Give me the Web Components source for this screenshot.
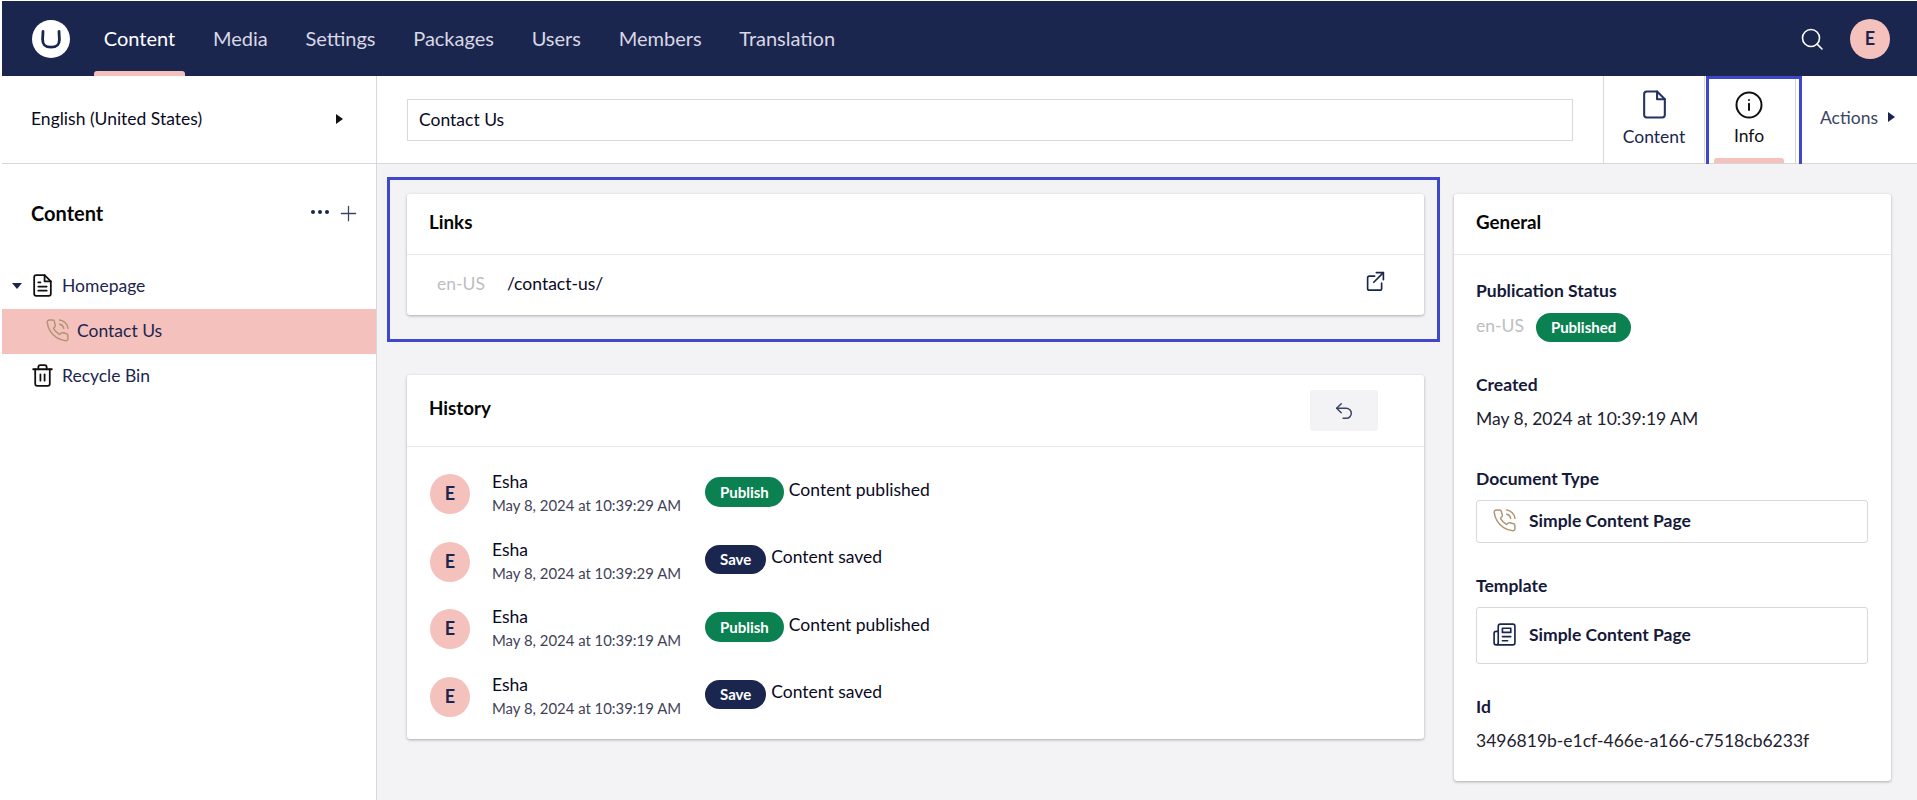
<!DOCTYPE html>
<html lang="en">
<head>
<meta charset="utf-8">
<title>Content</title>
<style>
  html, body { margin: 0; height: 100%; background: #fff; overflow: hidden; }
  body { font-family: Lato, "Noto Sans", sans-serif; font-size: 17.5px; color: #1b264f; }
</style>
</head>
<body>
<app-shell>
  <top-bar slot="top"></top-bar>
  <side-panel slot="side"></side-panel>
  <editor-bar slot="bar"></editor-bar>
  <info-view slot="main"></info-view>
</app-shell>

<script>
// icon paths, lucide style, all on a 24 box
const ICONS = {
  file: '<path d="M14 2H6a2 2 0 0 0-2 2v16a2 2 0 0 0 2 2h12a2 2 0 0 0 2-2V8z"/><path d="M14 2v6h6"/>',
  fileText: '<path d="M14 2H6a2 2 0 0 0-2 2v16a2 2 0 0 0 2 2h12a2 2 0 0 0 2-2V8z"/><path d="M14 2v6h6"/><path d="M16 13H8"/><path d="M16 17H8"/><path d="M10 9H8"/>',
  info: '<circle cx="12" cy="12" r="10"/><path d="M12 16v-5"/><path d="M12 8h.01"/>',
  search: '<circle cx="11" cy="11" r="8.5"/><path d="m22 22-4.9-4.9"/>',
  phone: '<path d="M22 16.92v3a2 2 0 0 1-2.18 2 19.79 19.79 0 0 1-8.63-3.07 19.5 19.5 0 0 1-6-6 19.79 19.79 0 0 1-3.07-8.67A2 2 0 0 1 4.11 2h3a2 2 0 0 1 2 1.72 12.84 12.84 0 0 0 .7 2.81 2 2 0 0 1-.45 2.11L8.09 9.91a16 16 0 0 0 6 6l1.27-1.27a2 2 0 0 1 2.11-.45 12.84 12.84 0 0 0 2.81.7A2 2 0 0 1 22 16.92z"/><path d="M14.05 2a9 9 0 0 1 8 7.94"/><path d="M14.05 6A5 5 0 0 1 18 10"/>',
  trash: '<path d="M3 6h18"/><path d="M19 6v14a2 2 0 0 1-2 2H7a2 2 0 0 1-2-2V6"/><path d="M8 6V4a2 2 0 0 1 2-2h4a2 2 0 0 1 2 2v2"/><path d="M10 11v6"/><path d="M14 11v6"/>',
  news: '<path d="M4 22h16a2 2 0 0 0 2-2V4a2 2 0 0 0-2-2H8a2 2 0 0 0-2 2v16a2 2 0 0 1-2 2Zm0 0a2 2 0 0 1-2-2v-9c0-1.1.9-2 2-2h2"/><path d="M18 14h-8"/><path d="M15 18h-5"/><path d="M10 6h8v4h-8V6Z"/>',
  open: '<path d="M11 7H5a2 2 0 0 0-2 2v12a2 2 0 0 0 2 2h12a2 2 0 0 0 2-2v-6"/><path d="M13 3h8v8"/><path d="M10 14 21 3"/>',
  undo: '<path d="M9 14 4 9l5-5"/><path d="M4 9h10.5a5.5 5.5 0 0 1 0 11H11"/>',
  plus: '<path d="M12 3v18"/><path d="M3 12h18"/>',
};

function icon(name, size, color, weight = 2) {
  return `<svg width="${size}" height="${size}" viewBox="0 0 24 24" fill="none" stroke="${color}"
    stroke-width="${weight}" stroke-linecap="round" stroke-linejoin="round" style="display:block;flex:none">${ICONS[name]}</svg>`;
}

// small base: open shadow root from a css + html string
class Base extends HTMLElement {
  connectedCallback() {
    if (this.shadowRoot) return;
    this.attachShadow({ mode: 'open' }).innerHTML = `<style>${this.css()}</style>${this.html()}`;
  }
  css() { return ':host { display: block; }'; }
  html() { return '<slot></slot>'; }
}

class AppShell extends Base {
  css() { return `
    :host { display: grid; height: 100vh; box-sizing: border-box; padding-top: 1px;
      grid-template-columns: 377px 1fr; grid-template-rows: 75px 88px 1fr;
      grid-template-areas: "top top" "side bar" "side main"; }
    ::slotted([slot="top"]) { grid-area: top; }
    ::slotted([slot="side"]) { grid-area: side; }
    ::slotted([slot="bar"]) { grid-area: bar; }
    ::slotted([slot="main"]) { grid-area: main; }
  `; }
  html() { return `<slot name="top"></slot><slot name="side"></slot><slot name="bar"></slot><slot name="main"></slot>`; }
}

class UserAvatar extends Base {
  css() { return `:host { display: flex; width: 40px; height: 40px; flex: none; box-sizing: border-box; padding-bottom: 2px; border-radius: 50%; background: #f5c1bc;
    align-items: center; justify-content: center; color: #1b264f; font-weight: 700; font-size: 18px; }`; }
  html() { return 'E'; }
}

class TopBar extends Base {
  css() { return `
    :host { display: flex; align-items: stretch; height: 75px; margin-left: 2px; padding: 0 27px 0 30px; background: #1b264f; color: #d8d7e4; font-size: 20px; }
    .logo { align-self: center; width: 38px; height: 38px; margin-right: 15px; }
    nav { display: flex; }
    a { position: relative; display: flex; align-items: center; padding: 0 18.85px 2px; }
    a.on { color: #fff; }
    a.on::after { content: ""; position: absolute; left: 9px; right: 9px; bottom: 0; height: 5px; background: #f5c1bc; border-radius: 3px 3px 0 0; }
    .end { margin-left: auto; display: flex; align-items: center; gap: 26px; }
  `; }
  html() {
    const items = ['Media', 'Settings', 'Packages', 'Users', 'Members', 'Translation'];
    return `
      <svg class="logo" viewBox="0 0 38 38"><circle cx="19" cy="19" r="19" fill="#fff"/>
        <path d="M11 11.5 10.6 19.5c0 6 3 7.7 8.4 7.7s8.4-1.7 8.4-7.7L27 11.5" fill="none" stroke="#1b264f" stroke-width="2.8" stroke-linecap="round"/></svg>
      <nav><a class="on">Content</a>${items.map((t) => `<a>${t}</a>`).join('')}</nav>
      <div class="end">${icon('search', 24, '#fff', 1.6)}<user-avatar></user-avatar></div>`;
  }
}

class TreeRow extends Base {
  css() { return `
    :host { display: flex; align-items: center; gap: 7px; height: 45px; box-sizing: border-box; padding-bottom: 2px; font-size: 17.5px; color: #1b264f; }
    :host([active]) { background: #f5c1bc; }
    .caret { width: 0; height: 0; margin: 0 1px 0 10px; border: 5px solid transparent; border-top: 6px solid #1b264f; border-bottom: 0; }
  `; }
  html() { return `${this.hasAttribute('open') ? '<span class="caret"></span>' : ''}<slot name="icon"></slot><slot></slot>`; }
}

class SidePanel extends Base {
  css() { return `
    :host { display: flex; flex-direction: column; border-right: 1px solid #d8d7d9; margin-left: 2px; }
    .lang { display: flex; align-items: center; justify-content: space-between; height: 88px; box-sizing: border-box; border-bottom: 1px solid #d8d7d9; padding: 0 33px 2px 29px; color: #0a0a1e; }
    .arrow { width: 0; height: 0; border: 5px solid transparent; border-left: 7px solid #111; border-right: 0; }
    .head { display: flex; align-items: center; height: 100px; box-sizing: border-box; padding: 0 18px 2px 29px; }
    h2 { margin: 0 0 1px; font-size: 20px; font-weight: 700; color: #060606; flex: 1; }
    .dots { display: flex; gap: 3px; margin: -3px 10px 0 0; }
    .dots i { width: 4px; height: 4px; border-radius: 50%; background: #1b264f; }
    .tree { display: flex; flex-direction: column; }
    .l1 { padding-left: 43px; }
    .l2 { padding-left: 28px; }
  `; }
  html() {
    return `
      <div class="lang"><span>English (United States)</span><span class="arrow"></span></div>
      <div class="head"><h2>Content</h2><span class="dots"><i></i><i></i><i></i></span>${icon('plus', 19, '#3c4463', 1.6)}</div>
      <div class="tree">
        <tree-row open><span slot="icon">${icon('fileText', 25, '#111', 1.7)}</span>Homepage</tree-row>
        <tree-row class="l1" active><span slot="icon">${icon('phone', 25, '#b09474', 1.4)}</span>Contact Us</tree-row>
        <tree-row class="l2"><span slot="icon">${icon('trash', 25, '#111', 1.7)}</span>Recycle Bin</tree-row>
      </div>`;
  }
}

class ViewTab extends Base {
  css() { return `
    :host { position: relative; display: flex; flex-direction: column; align-items: center; width: 101px; box-sizing: border-box; padding-top: 13px; border-left: 1px solid #d8d7d9; font-size: 17.5px; color: #1b264f; }
    :host([active]) { color: #111; border-right: 1px solid #d8d7d9; width: 92px; padding-right: 2px; padding-top: 14px; }
    :host([active])::after { content: ""; position: absolute; left: 9px; right: 11px; bottom: 0; height: 5px; background: #f5c1bc; border-radius: 3px 3px 0 0; }
    span { margin-top: 6px; }
    :host([active]) span { margin-top: 5px; }
  `; }
  html() { return `<slot></slot><span>${this.getAttribute('label')}</span>`; }
}

class EditorBar extends Base {
  css() { return `
    :host { display: flex; align-items: stretch; position: relative; height: 88px; box-sizing: border-box; border-bottom: 1px solid #d8d7d9; }
    .name { flex: none; width: 1166px; height: 42px; margin: 23px 30px 0 30px; box-sizing: border-box; border: 1px solid #d8d7d9; padding: 0 11px 2px; display: flex; align-items: center; color: #0a0a1e; }
    .tabs { display: flex; }
    .actions { display: flex; align-items: center; gap: 10px; padding: 0 0 5px 24px; color: #3c4463; }
    .arrow { width: 0; height: 0; border: 5px solid transparent; border-left: 7px solid #1b264f; border-right: 0; }
    .mark { position: absolute; left: 1329px; top: 0; width: 96px; height: 96px; box-sizing: border-box; border: 3px solid #3f48cc; }
  `; }
  html() {
    return `
      <div class="name">Contact Us</div>
      <div class="tabs">
        <view-tab label="Content">${icon('file', 31, '#25315f', 1.6)}</view-tab>
        <view-tab label="Info" active>${icon('info', 30, '#111', 1.6)}</view-tab>
      </div>
      <div class="actions"><span>Actions</span><span class="arrow"></span></div>
      <div class="mark"></div>`;
  }
}

class InfoCard extends Base {
  css() { return `
    :host { display: block; background: #fff; border-radius: 3px; box-shadow: 0 1px 3px rgba(0,0,0,.3); }
    header { display: flex; align-items: center; justify-content: space-between; min-height: 60px; padding: 0 37px 0 22px; border-bottom: 1px solid #e9e9eb; }
    h3 { margin: 0 0 6px; font-size: 18.8px; font-weight: 700; color: #060606; }
  `; }
  html() { return `<header><h3>${this.getAttribute('heading')}</h3><slot name="action"></slot></header><div><slot></slot></div>`; }
}

class StatusTag extends Base {
  css() { return `
    :host { display: inline-flex; align-items: center; height: 30px; padding: 0 15px 1px; box-sizing: border-box; border-radius: 15px; background: #0b8152; color: #fff; font-size: 15px; font-weight: 700; flex: none; }
    :host([kind="save"]) { background: #1b264f; height: 29px; }
    :host([slim]) { height: 29px; }
  `; }
}

class HistoryRow extends Base {
  css() { return `
    :host { display: flex; align-items: flex-start; height: 67.5px; box-sizing: border-box; padding-left: 23px; color: #0a0a1e; }
    .who { width: 213px; margin-left: 22px; flex: none; }
    .name { line-height: 20px; margin-top: -2px; }
    .date { font-size: 14.9px; line-height: 20px; margin-top: 3px; color: #3f4357; }
    .log { display: flex; align-items: center; gap: 5px; margin-top: 3px; }
    .log span { margin-top: -5px; }
  `; }
  html() {
    const kind = this.getAttribute('kind');
    return `
      <user-avatar></user-avatar>
      <div class="who"><div class="name">Esha</div><div class="date">${this.getAttribute('date')}</div></div>
      <div class="log"><status-tag kind="${kind}">${kind === 'save' ? 'Save' : 'Publish'}</status-tag><span>${this.getAttribute('text')}</span></div>`;
  }
}

class LinkedBox extends Base {
  css() { return `
    :host { display: flex; align-items: center; gap: 12px; box-sizing: border-box; border: 1px solid #d8d7d9; border-radius: 3px; padding: 0 0 2px 15px; font-weight: 700; color: #15193a; height: 43px; }
    :host([tall]) { height: 57px; padding-bottom: 3px; }
  `; }
}

class InfoView extends Base {
  css() { return `
    :host { display: grid; grid-template-columns: 1017px 437px; column-gap: 30px; align-items: start; padding: 30px 0 0 30px; background: #f3f3f5; position: relative; height: 100%; box-sizing: border-box; }
    .col { display: flex; flex-direction: column; gap: 60px; }
    .link { display: flex; align-items: center; height: 60px; box-sizing: border-box; padding: 0 38px 4px 30px; color: #0a0a1e; }
    .lang { color: #bdbdc2; width: 70px; flex: none; }
    .url { flex: 1; }
    .link svg { margin-bottom: 6px; }
    .undo { display: flex; align-items: center; justify-content: center; width: 68px; height: 41px; margin: 15px 9px 15px 0; background: #f3f3f5; border-radius: 3px; }
    .rows { padding-top: 27px; height: 292px; box-sizing: border-box; }
    .general { padding: 27px 23px 0 22px; height: 526px; box-sizing: border-box; color: #1e2130; }
    h4 { margin: 0 0 12px; line-height: 18px; font-size: 17.5px; font-weight: 700; color: #15193a; }
    .field { height: 94px; }
    .status { display: flex; align-items: center; gap: 12px; margin-top: 13px; }
    .status .lang { width: auto; margin-top: -5px; }
    .value { line-height: 22px; margin-top: 14px; }
    .mark { position: absolute; left: 10px; top: 13px; width: 1053px; height: 165px; box-sizing: border-box; border: 3px solid #3f48cc; pointer-events: none; }
  `; }
  html() {
    return `
      <div class="col">
        <info-card heading="Links">
          <div class="link"><span class="lang">en-US</span><span class="url">/contact-us/</span>${icon('open', 21, '#1b264f', 1.9)}</div>
        </info-card>
        <info-card heading="History">
          <div slot="action" class="undo">${icon('undo', 22, '#3c4463', 1.6)}</div>
          <div class="rows">
            <history-row kind="publish" date="May 8, 2024 at 10:39:29 AM" text="Content published"></history-row>
            <history-row kind="save" date="May 8, 2024 at 10:39:29 AM" text="Content saved"></history-row>
            <history-row kind="publish" date="May 8, 2024 at 10:39:19 AM" text="Content published"></history-row>
            <history-row kind="save" date="May 8, 2024 at 10:39:19 AM" text="Content saved"></history-row>
          </div>
        </info-card>
      </div>
      <info-card heading="General">
        <div class="general">
          <div class="field"><h4>Publication Status</h4><div class="status"><span class="lang">en-US</span><status-tag slim>Published</status-tag></div></div>
          <div class="field"><h4>Created</h4><div class="value">May 8, 2024 at 10:39:19 AM</div></div>
          <div class="field" style="height:107px"><h4>Document Type</h4><linked-box>${icon('phone', 25, '#b09474', 1.4)}Simple Content Page</linked-box></div>
          <div class="field" style="height:121px"><h4>Template</h4><linked-box tall>${icon('news', 25, '#1b264f', 1.6)}Simple Content Page</linked-box></div>
          <div class="field"><h4>Id</h4><div class="value">3496819b-e1cf-466e-a166-c7518cb6233f</div></div>
        </div>
      </info-card>
      <div class="mark"></div>`;
  }
}

customElements.define('user-avatar', UserAvatar);
customElements.define('top-bar', TopBar);
customElements.define('tree-row', TreeRow);
customElements.define('side-panel', SidePanel);
customElements.define('view-tab', ViewTab);
customElements.define('editor-bar', EditorBar);
customElements.define('info-card', InfoCard);
customElements.define('status-tag', StatusTag);
customElements.define('history-row', HistoryRow);
customElements.define('linked-box', LinkedBox);
customElements.define('info-view', InfoView);
customElements.define('app-shell', AppShell);
</script>
</body>
</html>
